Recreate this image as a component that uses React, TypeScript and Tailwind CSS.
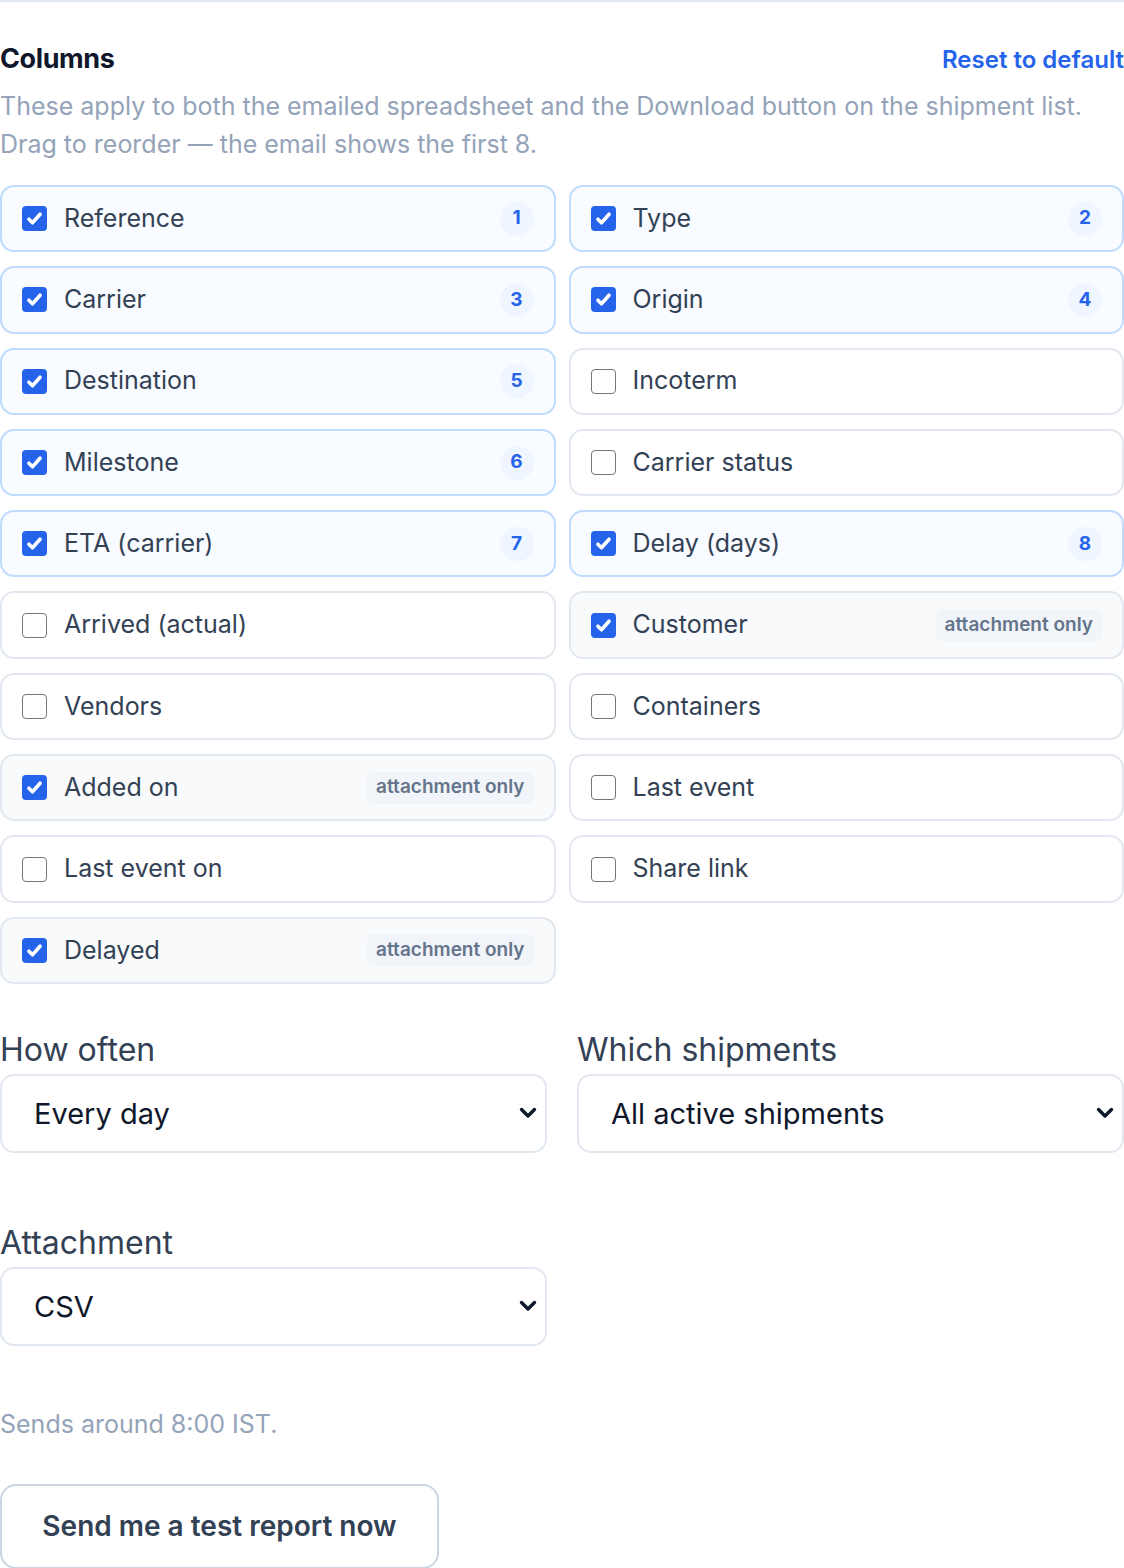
import React from "react";

type Col = {
  label: string;
  checked: boolean;
  order?: number;
  attachmentOnly?: boolean;
};

const columns: Col[] = [
  { label: "Reference", checked: true, order: 1 },
  { label: "Type", checked: true, order: 2 },
  { label: "Carrier", checked: true, order: 3 },
  { label: "Origin", checked: true, order: 4 },
  { label: "Destination", checked: true, order: 5 },
  { label: "Incoterm", checked: false },
  { label: "Milestone", checked: true, order: 6 },
  { label: "Carrier status", checked: false },
  { label: "ETA (carrier)", checked: true, order: 7 },
  { label: "Delay (days)", checked: true, order: 8 },
  { label: "Arrived (actual)", checked: false },
  { label: "Customer", checked: true, attachmentOnly: true },
  { label: "Vendors", checked: false },
  { label: "Containers", checked: false },
  { label: "Added on", checked: true, attachmentOnly: true },
  { label: "Last event", checked: false },
  { label: "Last event on", checked: false },
  { label: "Share link", checked: false },
  { label: "Delayed", checked: true, attachmentOnly: true },
];

const Checkbox = ({ checked }: { checked: boolean }) =>
  checked ? (
    <span className="flex h-[25px] w-[25px] shrink-0 items-center justify-center rounded-[4px] bg-[#2563eb]">
      <svg viewBox="0 0 16 16" className="h-[19px] w-[19px]" fill="none">
        <path d="M3.3 8.6l3 3 6.4-7.2" stroke="white" strokeWidth={3} strokeLinecap="round" strokeLinejoin="round" />
      </svg>
    </span>
  ) : (
    <span className="h-[25px] w-[25px] shrink-0 rounded-[4px] border-[1.5px] border-[#767676] bg-white" />
  );

const ColumnItem = ({ col }: { col: Col }) => {
  const tone = !col.checked
    ? "bg-white border-[#e2e8f0]"
    : col.attachmentOnly
      ? "bg-[#f8fafc] border-[#e2e8f0]"
      : "bg-[#f8fbff] border-[#bfdbfe]";

  return (
    <div className={`flex h-[67.3px] items-center rounded-[14px] border-2 pl-[20px] pr-[20px] ${tone}`}>
      <Checkbox checked={col.checked} />
      <span className="ml-[17px] text-[25px] text-[#334155]">{col.label}</span>
      <div className="ml-auto">
        {col.order !== undefined && (
          <span className="flex h-[34px] w-[34px] items-center justify-center rounded-full bg-[#eff6ff] text-[19px] font-bold text-[#2563eb]">
            {col.order}
          </span>
        )}
        {col.attachmentOnly && (
          <span className="flex h-[32px] items-center rounded-[7px] bg-[#f1f5f9] px-[9px] text-[19px] font-semibold text-[#64748b]">
            attachment only
          </span>
        )}
      </div>
    </div>
  );
};

const SelectBox = ({ label, value }: { label: string; value: string }) => (
  <div>
    <div className="mb-[6px] text-[32px] leading-[36px] text-[#334155]">{label}</div>
    <div className="flex h-[79px] items-center justify-between rounded-[14px] border-2 border-[#e2e8f0] bg-white pl-[32px] pr-[8px]">
      <span className="text-[29px] text-[#0f172a]">{value}</span>
      <svg viewBox="0 0 18 12" className="h-[12px] w-[18px]" fill="none">
        <path d="M2.5 2.5L9 9l6.5-6.5" stroke="#0f172a" strokeWidth={3.4} strokeLinecap="round" strokeLinejoin="round" />
      </svg>
    </div>
  </div>
);

export default function App() {
  return (
    <div className="min-h-screen bg-white font-['Inter',sans-serif]">
      <div className="border-t-2 border-[#e2e8f0] pt-[40px]">
        <div className="flex items-baseline justify-between">
          <h2 className="text-[27px] font-bold leading-[34px] tracking-[-0.4px] text-[#0f172a]">Columns</h2>
          <button className="text-[24px] font-semibold text-[#2563eb]">Reset to default</button>
        </div>
        <p className="mt-[9px] text-[25px] leading-[38px] text-[#94a3b8]">
          These apply to both the emailed spreadsheet and the Download button on the shipment list.
          <br />
          Drag to reorder — the email shows the first 8.
        </p>

        <div className="mt-[22px] grid grid-cols-2 gap-x-[13px] gap-y-[14px]">
          {columns.map((c) => (
            <ColumnItem key={c.label} col={c} />
          ))}
        </div>

        <div className="mt-[48px] grid grid-cols-2 gap-x-[30px] gap-y-[72px]">
          <SelectBox label="How often" value="Every day" />
          <SelectBox label="Which shipments" value="All active shipments" />
          <SelectBox label="Attachment" value="CSV" />
        </div>

        <p className="mt-[59px] text-[25px] leading-[38px] text-[#94a3b8]">Sends around 8:00 IST.</p>

        <button className="mt-[41px] h-[85px] w-[439px] rounded-[16px] border-2 border-[#cbd5e1] bg-white text-[28px] font-semibold text-[#334155]">
          Send me a test report now
        </button>
      </div>
    </div>
  );
}
